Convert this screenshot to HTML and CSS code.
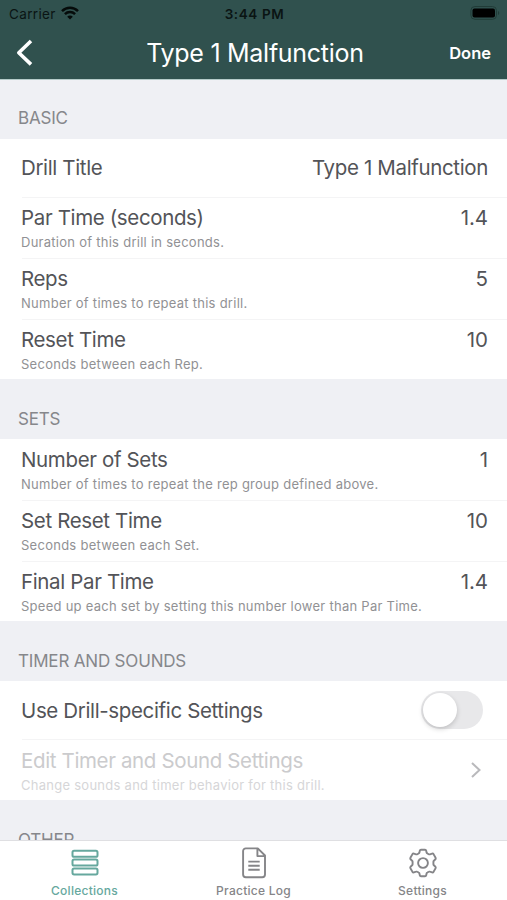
FILE: index.html
```html
<!DOCTYPE html>
<html lang="en">
<head>
<meta charset="utf-8">
<title>Type 1 Malfunction</title>
<link rel="stylesheet" href="styles.css">
</head>
<body>
<div class="screen">
  <header class="top">
    <div class="status">
      <div class="carrier"><span>Carrier</span>
        <svg class="wifi" width="18" height="14" viewBox="0 0 18 14" fill="none" stroke="#050b0a" stroke-width="2.5"><path d="M1 5.200C5.600.7 12.400.7 17 5.200M3.900 8.200c2.900-2.800 7.300-2.800 10.200 0"/><path d="M9 13.500 6.200 10.700c1.600-1.500 4-1.500 5.600 0z" fill="#050b0a" stroke="none"/></svg>
      </div>
      <div class="clock">3:44 PM</div>
      <svg class="battery" width="30" height="14" viewBox="0 0 30 14"><rect x=".9" y=".5" width="25.600" height="12.800" rx="4" fill="none" stroke="#213c38"/><rect x="2.500" y="2.500" width="22.500" height="9" rx="2" fill="#000"/><path d="M28 5v4c1.700-.7 1.700-3.300 0-4z" fill="#213c38"/></svg>
    </div>
    <nav class="nav">
      <svg class="back" width="18" height="28" viewBox="0 0 18 28" fill="none" stroke="#fff" stroke-width="3.600" stroke-linejoin="round"><path d="M15 2 2.800 13.700l12.200 11.700"/></svg>
      <h1>Type 1 Malfunction</h1>
      <span class="done">Done</span>
    </nav>
  </header>

  <main>
    <h2>BASIC</h2>
    <section>
      <div class="row single"><div class="line"><span>Drill Title</span><span>Type 1 Malfunction</span></div></div>
      <div class="row"><div class="line"><span>Par Time (seconds)</span><span class="num">1.4</span></div><p>Duration of this drill in seconds.</p></div>
      <div class="row"><div class="line"><span>Reps</span><span class="num">5</span></div><p>Number of times to repeat this drill.</p></div>
      <div class="row"><div class="line"><span>Reset Time</span><span class="num">10</span></div><p>Seconds between each Rep.</p></div>
    </section>
    <h2>SETS</h2>
    <section>
      <div class="row"><div class="line"><span>Number of Sets</span><span class="num">1</span></div><p>Number of times to repeat the rep group defined above.</p></div>
      <div class="row"><div class="line"><span>Set Reset Time</span><span class="num">10</span></div><p>Seconds between each Set.</p></div>
      <div class="row"><div class="line"><span>Final Par Time</span><span class="num">1.4</span></div><p>Speed up each set by setting this number lower than Par Time.</p></div>
    </section>
    <h2>TIMER AND SOUNDS</h2>
    <section>
      <div class="row single toggle"><div class="line"><span>Use Drill-specific Settings</span><span class="switch"><span class="knob"></span></span></div></div>
      <div class="row link">
        <div class="disabled"><div class="line"><span>Edit Timer and Sound Settings</span></div><p>Change sounds and timer behavior for this drill.</p></div>
        <svg width="12" height="18" viewBox="0 0 12 18" fill="none" stroke="#b9b9bc" stroke-width="2"><path d="m2 2 7.500 7L2 16"/></svg>
      </div>
    </section>
    <h2>OTHER</h2>
  </main>

  <footer class="tabs">
    <div class="tab active">
      <svg width="30" height="32" viewBox="0 0 30 32" fill="none" stroke="currentColor" stroke-width="2"><rect x="2.500" y="3.800" width="25" height="6" rx="1.600"/><rect x="2.500" y="12.600" width="25" height="6" rx="1.600"/><rect x="2.500" y="21.400" width="25" height="6" rx="1.600"/></svg>
      <span>Collections</span>
    </div>
    <div class="tab">
      <svg width="30" height="32" viewBox="0 0 30 32" fill="none" stroke="currentColor" stroke-width="1.900" stroke-linejoin="round"><path d="M6.800 1.400h12L26 8.500v19a2.700 2.700 0 0 1-2.700 2.700H6.800a2.700 2.700 0 0 1-2.700-2.700V4.100A2.700 2.700 0 0 1 6.800 1.400zM18.400 1.500v7.600H26M9.300 14.600h11.400M9.300 18.700h11.400M9.300 22.800h11.400"/></svg>
      <span>Practice Log</span>
    </div>
    <div class="tab">
      <svg width="30" height="32" viewBox="-15 -16 30 32" fill="none" stroke="currentColor" stroke-width="1.900" stroke-linejoin="round"><path d="M-2-13.300H2Q3-13.300 3.200-12.300L3.600-10.400Q3.800-9.800 4.400-9.500L5.700-8.750Q6.210-8.440 6.900-8.700L9.100-9.400Q10.020-9.700 10.500-8.900L12.600-5.200Q13.020-4.300 12.400-3.700L10.900-2.300Q10.410-1.800 10.410-1.160V1.160Q10.410 1.800 10.900 2.300L12.400 3.700Q13.020 4.300 12.600 5.200L10.500 8.900Q10.020 9.700 9.100 9.400L6.900 8.700Q6.210 8.440 5.700 8.750L4.400 9.500Q3.800 9.800 3.600 10.400L3.200 12.300Q3 13.300 2 13.300H-2Q-3 13.300-3.200 12.300L-3.600 10.400Q-3.800 9.800-4.400 9.500L-5.700 8.750Q-6.210 8.440-6.900 8.700L-9.100 9.400Q-10.020 9.700-10.500 8.900L-12.600 5.200Q-13.020 4.300-12.400 3.700L-10.900 2.300Q-10.410 1.800-10.410 1.160V-1.160Q-10.410-1.800-10.900-2.300L-12.400-3.700Q-13.020-4.300-12.600-5.200L-10.500-8.900Q-10.020-9.700-9.100-9.400L-6.900-8.700Q-6.210-8.440-5.700-8.750L-4.400-9.500Q-3.800-9.800-3.600-10.400L-3.200-12.300Q-3-13.300-2-13.300z"/><circle r="4.900"/></svg>
      <span>Settings</span>
    </div>
  </footer>
</div>
</body>
</html>
```

FILE: styles.css
```css
* { box-sizing: border-box; margin: 0; }
body { font-family: Inter, "Liberation Sans", sans-serif; background: #eff0f4; color: #535458; }
.screen { height: 900px; display: flex; flex-direction: column; overflow: hidden; }
.top { flex: none; height: 80px; background: #30514e; border-bottom: 1px solid #b5cbc9; }
.status { height: 27px; padding: 0 7px 0 9px; display: grid; grid-template-columns: 1fr auto 1fr; align-items: center; font-size: 13.500px; color: #0a1413; }
.carrier { display: flex; align-items: center; gap: 5px; letter-spacing: .35px; }
.wifi { margin-top: -1px; }
.clock { font-weight: 600; letter-spacing: .6px; }
.battery { justify-self: end; margin-top: -1px; }
.nav { height: 52px; padding: 0 16px; display: grid; grid-template-columns: 1fr auto 1fr; align-items: center; color: #fff; }
.back { margin-top: -1px; }
h1 { font-size: 25px; font-weight: 400; line-height: 50px; letter-spacing: -.28px; padding-left: 3px; }
.done { justify-self: end; font-size: 16.500px; font-weight: 600; }
main { flex: 1; min-height: 0; overflow: hidden; }
h2 { height: 60px; padding: 30px 18px 0; font-size: 17px; line-height: 20px; font-weight: 400; letter-spacing: -.18px; color: #86878b; }
h2:first-child { height: 59px; padding-top: 28px; }
section { background: #fff; }
.row { height: 61px; padding: 8px 19px 0 21px; }
.row:first-child { padding-top: 9px; }
.row:last-child { height: 60px; }
.row.single { height: 58px; padding-top: 17px; }
.row.toggle { padding-top: 18px; }
.row + .row { border-top: 1px solid #f4f4f5; border-image: linear-gradient(90deg, transparent 23px, #f4f4f5 23px) 1; }
.line { display: flex; justify-content: space-between; font-size: 20.500px; line-height: 24px; letter-spacing: -.36px; }
.num { letter-spacing: -.05px; }
p { font-size: 13px; line-height: 16px; padding-top: 4px; letter-spacing: .265px; color: #919194; }
.switch { width: 62px; height: 38px; border-radius: 19px; background: #e8e8ea; margin: -8px 5.500px 0 0; padding: 2px; }
.knob { display: block; width: 34px; height: 34px; border-radius: 50%; background: #fff; box-shadow: 0 2px 5px rgba(0,0,0,.18); }
.row.link { height: 61px; display: flex; justify-content: space-between; padding: 9px 25px 0 21px; }
.link svg { margin-top: 12px; }
.disabled { color: #cbcbcd; }
.disabled p { color: #d6d6d8; }
.tabs { flex: none; height: 60px; display: grid; grid-template-columns: repeat(3, 1fr); background: #fff; border-top: 1px solid #dfdfe2; }
.tab { display: flex; flex-direction: column; align-items: center; padding-top: 6px; color: #858588; }
.tab svg { flex: none; }
.tab span { font-size: 12px; line-height: 15px; margin-top: 4px; font-weight: 500; letter-spacing: .25px; }
.tab.active { color: #66a89e; }
```
